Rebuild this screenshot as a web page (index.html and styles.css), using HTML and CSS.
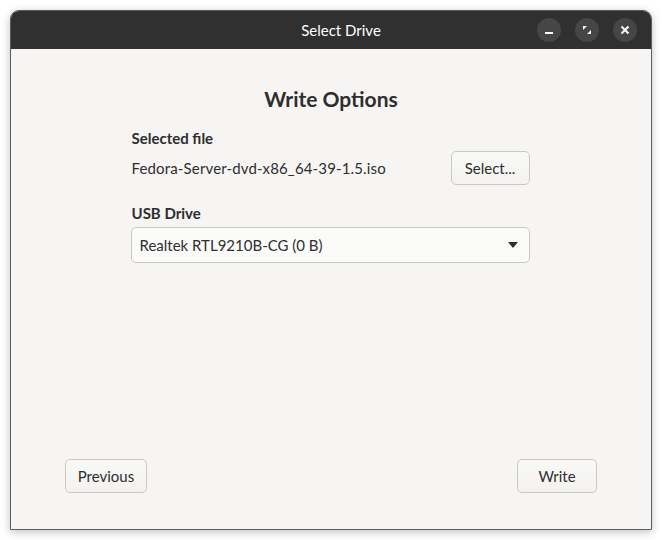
FILE: index.html
```html
<!DOCTYPE html>
<html>
<head>
<meta charset="utf-8">
<link rel="stylesheet" href="styles.css">
</head>
<body>
<div class="window">
  <header class="titlebar">
    <div class="title">Select Drive</div>
    <div class="controls">
      <span class="ctl"><svg width="10" height="10" viewBox="0 0 10 10"><rect x="1" y="7" width="8" height="2" fill="#fff"/></svg></span>
      <span class="ctl"><svg width="10" height="10" viewBox="0 0 10 10"><path d="M1 1h4L1 5z M9 9H5l4-4z" fill="#fff"/></svg></span>
      <span class="ctl"><svg width="10" height="10" viewBox="0 0 10 10"><path d="M1.5 1.5l7 7M8.5 1.5l-7 7" stroke="#fff" stroke-width="2"/></svg></span>
    </div>
  </header>
  <main class="content">
    <h1 class="heading">Write Options</h1>
    <section class="form">
      <div class="label">Selected file</div>
      <div class="file-row">
        <span class="filename">Fedora-Server-dvd-x86_64-39-1.5.iso</span>
        <button class="btn select-btn">Select...</button>
      </div>
      <div class="label usb-label">USB Drive</div>
      <div class="dropdown">
        <span>Realtek RTL9210B-CG (0 B)</span>
        <svg width="10" height="6" viewBox="0 0 10 6"><path d="M0 0h10L5 6z" fill="#2e2e2e"/></svg>
      </div>
    </section>
    <footer class="actions">
      <button class="btn nav-btn prev">Previous</button>
      <button class="btn nav-btn write">Write</button>
    </footer>
  </main>
</div>
</body>
</html>
```
FILE: styles.css
```css
html, body {
  margin: 0;
  padding: 0;
  background: #ffffff;
}
body {
  padding: 10px;
  font-family: Lato, "Noto Sans", sans-serif;
}
.window {
  width: 640px;
  height: 518px;
  border: 1px solid #5c5c5c;
  border-radius: 9px 9px 0 0;
  overflow: hidden;
  display: flex;
  flex-direction: column;
  background: #f6f5f4;
  box-shadow: 0 2px 8px rgba(0,0,0,0.25);
}
.titlebar {
  height: 38px;
  background: #303030;
  display: flex;
  align-items: center;
  justify-content: center;
  position: relative;
  flex-shrink: 0;
  padding-left: 20px;
}
.title {
  color: #ffffff;
  font-size: 15px;
}
.controls {
  position: absolute;
  right: 14px;
  top: 7px;
  display: flex;
  gap: 14px;
}
.ctl {
  width: 24px;
  height: 24px;
  border-radius: 50%;
  background: #464646;
  display: flex;
  align-items: center;
  justify-content: center;
}
.content {
  flex: 1;
  display: flex;
  flex-direction: column;
  padding: 0 54px 36px 54px;
}
.heading {
  margin: 38px 0 0 0;
  text-align: center;
  font-size: 21px;
  font-weight: 700;
  color: #2e2e2e;
  line-height: 24px;
}
.form {
  width: 399px;
  margin: 18px auto 0 auto;
  color: #2e2e2e;
  font-size: 15px;
}
.label {
  font-weight: 700;
  line-height: 18px;
}
.file-row {
  display: flex;
  justify-content: space-between;
  align-items: center;
  margin-top: 4px;
}
.filename {
  letter-spacing: 0.15px;
}
.btn {
  font-family: inherit;
  font-size: 15px;
  color: #2e2e2e;
  background: linear-gradient(#f9f9f8, #f3f2f1);
  border: 1px solid #cdc7c2;
  border-radius: 5px;
  height: 34px;
  padding: 0;
}
.select-btn {
  width: 79px;
  margin-right: 1px;
}
.usb-label {
  margin-top: 19px;
}
.dropdown {
  margin-top: 5px;
  height: 34px;
  border: 1px solid #cdc7c2;
  border-radius: 5px;
  background: #fbfbfa;
  display: flex;
  align-items: center;
  justify-content: space-between;
  padding: 0 11px 0 8px;
  margin-left: -1px;
  margin-right: 1px;
}
.actions {
  margin-top: auto;
  display: flex;
  justify-content: space-between;
}
.prev { width: 82px; }
.write { width: 80px; }
```
